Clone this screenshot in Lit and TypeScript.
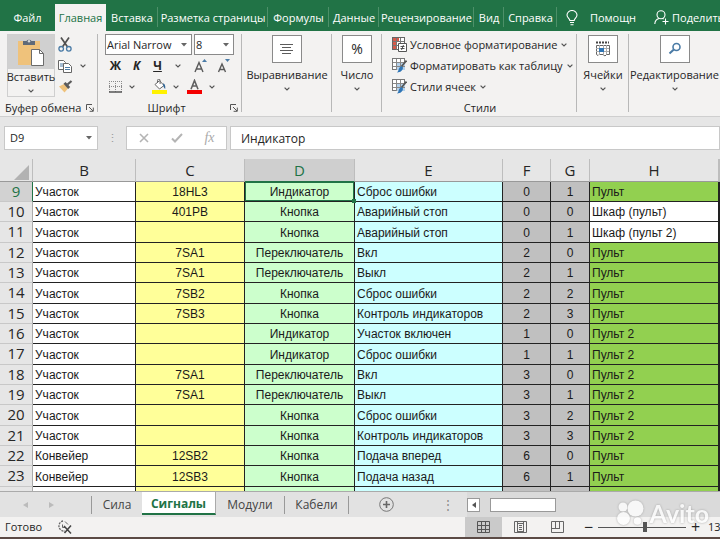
import { LitElement, html, css, svg, nothing } from "lit";
import { customElement, state } from "lit/decorators.js";
import { classMap } from "lit/directives/class-map.js";

type Row = [string, string, string, string, string, string, string];

const COLUMNS = ["B", "C", "D", "E", "F", "G", "H"];
const FIRST_ROW = 9;
const ROWS: Row[] = [
  ["Участок", "18HL3", "Индикатор", "Сброс ошибки", "0", "1", "Пульт"],
  ["Участок", "401PB", "Кнопка", "Аварийный стоп", "0", "0", "Шкаф (пульт)"],
  ["Участок", "", "Кнопка", "Аварийный стоп", "0", "1", "Шкаф (пульт 2)"],
  ["Участок", "7SA1", "Переключатель", "Вкл", "2", "0", "Пульт"],
  ["Участок", "7SA1", "Переключатель", "Выкл", "2", "1", "Пульт"],
  ["Участок", "7SB2", "Кнопка", "Сброс ошибки", "2", "2", "Пульт"],
  ["Участок", "7SB3", "Кнопка", "Контроль индикаторов", "2", "3", "Пульт"],
  ["Участок", "", "Индикатор", "Участок включен", "1", "0", "Пульт 2"],
  ["Участок", "", "Индикатор", "Сброс ошибки", "1", "1", "Пульт 2"],
  ["Участок", "7SA1", "Переключатель", "Вкл", "3", "0", "Пульт 2"],
  ["Участок", "7SA1", "Переключатель", "Выкл", "3", "1", "Пульт 2"],
  ["Участок", "", "Кнопка", "Сброс ошибки", "3", "2", "Пульт 2"],
  ["Участок", "", "Кнопка", "Контроль индикаторов", "3", "3", "Пульт 2"],
  ["Конвейер", "12SB2", "Кнопка", "Подача вперед", "6", "0", "Пульт"],
  ["Конвейер", "12SB3", "Кнопка", "Подача назад", "6", "1", "Пульт"],
  ["", "", "", "Сброс", "", "", "Пульт"],
];

const RIBBON_TABS = ["Файл", "Главная", "Вставка", "Разметка страницы", "Формулы", "Данные", "Рецензирование", "Вид", "Справка"];
const SHEETS = ["Сила", "Сигналы", "Модули", "Кабели"];

const chevron = html`<svg class="chev" width="6" height="4" viewBox="0 0 6 4"><path d="M.6 .6 3 3 5.4 .6" fill="none" stroke="#555" stroke-width="1.2"/></svg>`;
const triangle = html`<svg class="tri" width="6" height="4" viewBox="0 0 6 4"><path d="M0 0h6L3 3.6z" fill="#666"/></svg>`;
const launcher = html`<svg width="8" height="8" viewBox="0 0 8 8"><path d="M.5 6V.5H6M3 3l4 4M7.3 3.6v3.7H3.6" fill="none" stroke="#555"/></svg>`;

const pasteIcon = html`<svg width="28" height="28" viewBox="0 0 28 28">
  <rect x="1" y="3" width="22" height="24" fill="#efc27b"/>
  <path d="M6 3h3.500a3 2.600 0 0 1 5 0H18v4H6z" fill="#5f6a78"/><circle cx="12" cy="3.200" r="1.200" fill="#d9d9d9"/>
  <path d="M14.500 11.500h8l4 4v12h-12z" fill="#fff" stroke="#6b6b6b"/><path d="M22.500 11.500v4h4" fill="none" stroke="#6b6b6b"/></svg>`;
const cutIcon = html`<svg width="14" height="15" viewBox="0 0 14 15"><path d="M3 .5 9.600 10M11 .5 4.400 10" stroke="#505050" stroke-width="1.700" fill="none"/>
  <circle cx="3.200" cy="11.800" r="2.300" fill="none" stroke="#4a7ba6" stroke-width="1.300"/><circle cx="10.800" cy="11.800" r="2.300" fill="none" stroke="#4a7ba6" stroke-width="1.300"/></svg>`;
const copyIcon = html`<svg width="14" height="14" viewBox="0 0 14 14"><path d="M.5 1.500h5l2 2v7h-7z" fill="#fff" stroke="#666"/><path d="M2 5h4M2 7h4" stroke="#4a7ba6"/>
  <path d="M5.500 4.500h5l3 3v6h-8z" fill="#fff" stroke="#666"/><path d="M7 8.500h5M7 10.500h5" stroke="#4a7ba6"/></svg>`;
const brushIcon = html`<svg width="15" height="13" viewBox="0 0 15 13"><path d="M1 6.500 6 4l4 4.500L6.500 12.500z" fill="#efc27b"/><path d="M5.500 3.800 7.600 2l4.600 5-2 2z" fill="#5a5a5a"/><path d="m9.500 4.500 4-3.500" stroke="#5a5a5a" stroke-width="2.200"/></svg>`;
const borderIcon = html`<svg width="13" height="12" viewBox="0 0 13 12"><path d="M.5 0v11M12.500 0v11M6.500 0v11M0 .5h13M0 5.500h13" stroke="#8a8a8a" stroke-dasharray="1 1" fill="none"/><path d="M0 11h13" stroke="#555" stroke-width="1.500"/></svg>`;
const fillIcon = html`<svg width="16" height="15" viewBox="0 0 16 15"><path d="M0 11h15v4H0z" fill="#fff200"/><path d="m3 5.500 4.500-3.800L12 6.500 7.500 10z" fill="#fff" stroke="#666"/><path d="M5.500 4V1.500a1.300 1.300 0 0 1 2.600 0V5" fill="none" stroke="#666"/><path d="M11 4.500c2 0 2.500 2.500 2.200 5.500-1.500-1-2-3-2.200-5.500z" fill="#2f6597"/></svg>`;
const fontColorIcon = html`<svg width="15" height="15" viewBox="0 0 15 15"><path d="M0 11h15v4H0z" fill="#f40000"/><path d="M4 10.200 7.500 1.500 11 10.200M5.200 7h4.600" fill="none" stroke="#606060" stroke-width="1.600"/></svg>`;
const growIcon = (up: boolean) => html`<svg width="14" height="14" viewBox="0 0 14 14">${up
  ? svg`<path d="M1 13 5 3.500 9 13M2.400 10h5.200" fill="none" stroke="#5a5a5a" stroke-width="1.400"/><path d="m8 3 2.500-3L13 3z" fill="#4a7ba6"/>`
  : svg`<path d="M1.500 13 5 5l3.500 8M2.800 10.500h4.400" fill="none" stroke="#5a5a5a" stroke-width="1.400"/><path d="m8 0 2.500 3L13 0z" fill="#4a7ba6"/>`}</svg>`;
const alignIcon = html`<svg width="14" height="12" viewBox="0 0 14 12"><path d="M0 1.500h13M2 4.500h9M0 7.500h13M2 10.500h9" stroke="#5c5c5c"/></svg>`;
const cellsIcon = html`<svg width="16" height="16" viewBox="0 0 16 16"><path d="M1 1.500h13" stroke="#444" stroke-width="2" stroke-dasharray="2 1"/><path d="M1.500 4.500h13v9h-3l-1.500 1.500-2-1.500H4l-1 1-1.500-1z" fill="#fff" stroke="#666"/><path d="M1 7.500h13M1 10.500h13M4.500 4v10M8.500 4v10M11.500 4v9" stroke="#aaa"/><path d="M4 7h5v4H4z" fill="#2f75b5"/></svg>`;
const findIcon = html`<svg width="14" height="14" viewBox="0 0 14 14"><circle cx="8.500" cy="5" r="3.500" fill="none" stroke="#4a7ba6" stroke-width="1.600"/><path d="M5.800 7.500 1.500 11.500" stroke="#4a7ba6" stroke-width="2"/></svg>`;
const condIcon = html`<svg width="15" height="15" viewBox="0 0 15 15"><rect x=".5" y=".5" width="12" height="12" fill="#fff" stroke="#666"/><path d="M1 1h6v3H1zM1 5h3v3H1zM1 9h4v3H1z" fill="#d65a4a"/><path d="M4.500 1v12M8.500 1v12M1 4.500h11M1 8.500h11" stroke="#777"/><path d="M6.500 6.500h8v8h-8z" fill="#fff" stroke="#555"/><path d="M8.500 9.500h4M8.500 11.500h4M11.500 8l-2 5" stroke="#444" stroke-width=".9"/></svg>`;
const tableIcon = html`<svg width="15" height="15" viewBox="0 0 15 15"><rect x=".5" y=".5" width="12" height="11" fill="#fff" stroke="#777"/><path d="M4 4h9v8H4z" fill="#b5d1ea"/><path d="M4.500 1v11M8.500 1v11M1 4.500h12M1 8.500h12" stroke="#888"/><path d="m14.500 2.500-5 6" stroke="#555" stroke-width="1.800"/><path d="M9.500 8 11 9.600c0 3-2.500 4.900-6 4.900 2-1.500 1.500-5.500 4.500-6.500z" fill="#2f75b5"/></svg>`;
const bulbIcon = html`<svg width="12" height="16" viewBox="0 0 12 16"><path d="M3.800 10.500C3.800 8.800 1 7.800 1 5a5 4.500 0 0 1 10 0c0 2.800-2.800 3.800-2.800 5.500zM4 12.500h4M4.500 14.700h3" fill="none" stroke="#fff" stroke-width="1.100"/></svg>`;
const shareIcon = html`<svg width="15" height="15" viewBox="0 0 15 15"><circle cx="7" cy="4.700" r="4" fill="none" stroke="#fff" stroke-width="1.100"/><path d="M.8 14C1 10.500 3 9 5 8.500M8.500 8.500l1.200.6M8.500 11.500h6M11.500 8.500v6" fill="none" stroke="#fff" stroke-width="1.100"/></svg>`;
const cancelIcon = html`<svg width="10" height="10" viewBox="0 0 10 10"><path d="m1 1 8 8M9 1 1 9" stroke="#b4b4b4" stroke-width="1.600"/></svg>`;
const okIcon = html`<svg width="12" height="10" viewBox="0 0 12 10"><path d="m1 5.500 3 3L11 1" fill="none" stroke="#b4b4b4" stroke-width="2"/></svg>`;
const recordIcon = html`<svg width="16" height="15" viewBox="0 0 16 15"><path d="M6 1a5 5 0 1 0 2 10" fill="none" stroke="#666" stroke-width="1.300" stroke-dasharray="2 1"/><path d="M5.500 4.500v3h3M8 1.500l3 3" fill="none" stroke="#666"/><path d="m7 6 7 7.500M14 5.500 7.500 13" stroke="#444" stroke-width="1.500"/></svg>`;
const gridView = html`<svg width="13" height="12" viewBox="0 0 13 12"><path d="M.5.5h12v11H.5zM4.500 0v12M8.500 0v12M0 4.500h13M0 8.500h13" fill="none" stroke="#555"/></svg>`;
const pageView = html`<svg width="13" height="12" viewBox="0 0 13 12"><path d="M.5.5h12v11H.5zM3.500 1v10.500M9.500 1v10.500M3 2.500h7M5 4.500h3M5 6.500h3M5 8.500h3M3 10.500h7" fill="none" stroke="#666"/></svg>`;
const breakView = html`<svg width="13" height="12" viewBox="0 0 13 12"><path d="M.5.5h12v11H.5zM4.500 1v6M8.500 1v6M1 7.500h8" fill="none" stroke="#666"/></svg>`;

@customElement("app-root")
export class AppRoot extends LitElement {
  @state() private sheet = "Сигналы";
  @state() private tab = "Главная";

  static styles = css`
    :host { display: flex; flex-direction: column; height: 100vh; overflow: hidden; position: relative; background: #e6e6e6; color: #262626; font: 400 11px/16px "Open Sans", "Noto Sans", sans-serif; }
    * { box-sizing: border-box; }
    button, input, select { font: inherit; color: inherit; background: none; border: 0; padding: 0; margin: 0; border-radius: 0; white-space: nowrap; }
    svg { display: block; flex: none; }

    .tabs { flex: none; display: grid; grid-template-columns: 55px 51px 52px 110px 61px 50px 95px 30px 53px 88px 1fr; height: 31px; padding-top: 4px; background: #217346; color: #fff; overflow: hidden; }
    .tabs button { display: flex; align-items: center; justify-content: center; position: relative; }
    .tabs .on { background: #f3f2f1; color: #217346; }
    .tabs .div::after { content: ""; position: absolute; right: 0; top: 3px; bottom: 4px; width: 1px; background: #4d9069; }
    .tabs .tell { gap: 12px; }
    .tabs .share { gap: 3px; justify-content: flex-start; padding-left: 9px; }

    .ribbon { flex: none; display: grid; grid-template-columns: 98px 144px 90px 50px 195px 52px 1fr; height: 86px; padding-top: 3px; background: #f3f2f1; border-bottom: 1px solid #cfcfcf; overflow: hidden; }
    .group { display: flex; flex-direction: column; min-width: 0; background: linear-gradient(#b8b8b8, #b8b8b8) right top / 1px 78px no-repeat; }
    .group:last-child { background: none; }
    .body { flex: 1; display: flex; min-height: 0; }
    .foot { display: flex; align-items: center; height: 16px; padding: 0 4px 0 5px; }
    .foot span { flex: 1; text-align: center; white-space: nowrap; }
    .foot .start { text-align: left; }
    .paste { width: 48px; height: 63px; margin-left: 7px; display: flex; flex-direction: column; align-items: center; border: 1px solid #cfcfcf; }
    .paste .pic { width: 100%; height: 34px; display: flex; align-items: center; justify-content: center; background: #d0d0d0; }
    .paste .chev { margin-top: 4px; }
    .clip { display: grid; grid-auto-rows: 21px; margin-left: 3px; }
    .clip button { display: flex; align-items: center; gap: 8px; }
    .font { flex-direction: column; padding: 0 3px 0 7px; }
    .line { display: flex; align-items: center; height: 21px; }
    .combo { display: flex; align-items: center; height: 21px; border: 1px solid #8a8a8a; background: #fff; position: relative; }
    .combo select { appearance: none; width: 100%; height: 100%; padding-left: 1px; }
    .combo .tri { position: absolute; right: 4px; pointer-events: none; }
    .combo.name { width: 87px; margin-right: 2px; }
    .combo.size { width: 40px; }
    .cells { display: grid; grid-template-columns: 21px 21px 21px 20px 26px 20px; }
    .cells button, .fills button { display: flex; align-items: center; justify-content: center; height: 21px; }
    .cells b { font-size: 12px; }
    .fills { display: grid; grid-template-columns: 21px 12px 11px 21px 12px 24px 12px; }
    .big { display: flex; flex-direction: column; align-items: center; padding-top: 1px; min-width: 0; }
    .big .frame { width: 30px; height: 28px; display: flex; align-items: center; justify-content: center; background: #fff; border: 1px solid #8a8a8a; font-size: 14px; }
    .big .lbl { margin: 4px 0; }
    .styles { flex-direction: column; padding-left: 10px; }
    .styles button { height: 21px; display: flex; align-items: center; gap: 3px; }
    .styles .chev { margin-left: 1px; }

    .formula { flex: none; display: flex; height: 42px; padding: 9px 0; }
    .formula > * { background: #fff; border: 1px solid #c8c8c8; }
    .where { width: 94px; margin-left: 4px; display: flex; align-items: center; padding: 0 5px; }
    .where input { width: 100%; min-width: 0; }
    .formula .grip { width: 28px; display: flex; align-items: center; justify-content: center; background: none; border: 0; color: #999; }
    .fx { width: 101px; display: grid; grid-template-columns: 1fr 1fr 1fr; margin-right: 3px; }
    .fx button { display: flex; align-items: center; justify-content: center; color: #aaa; font: italic 14px "Liberation Serif", serif; }
    .value { flex: 1; min-width: 0; }
    .value input { width: 100%; height: 100%; padding-left: 10px; font-size: 12px; }

    .sheet { flex: 1; min-height: 0; overflow: hidden; }
    table { width: 100%; table-layout: fixed; border-collapse: separate; border-spacing: 0; }
    th { padding: 0; font-weight: 400; color: #262626; }
    .w-n { width: 33px; } .w-b { width: 103px; } .w-c { width: 109px; } .w-d { width: 110px; } .w-e { width: 148px; } .w-f { width: 48px; } .w-g { width: 39px; } .w-h { width: 129px; }
    thead th { height: 23px; font-size: 15px; line-height: 22px; border-right: 1px solid #bdbdbd; border-bottom: 1px solid #999; }
    thead .sel { background: #cfcfcf; color: #217346; border-bottom-color: #217346; }
    .corner svg { margin: 5px 3px 0 auto; }
    tbody tr { height: 20px; }
    tbody tr:nth-child(3n) { height: 21px; }
    tbody th { font-size: 15px; line-height: 18px; vertical-align: top; border-right: 1px solid #aaa; border-bottom: 1px solid #c8c8c8; }
    tbody .sel { background: #d2d2d2; color: #217346; border-right-color: #217346; }
    td { padding: 0 2px; font: 12px/18px "Liberation Sans Narrow", "Liberation Sans", sans-serif; color: #1a1a1a; vertical-align: bottom; border-right: 1px solid #222; border-bottom: 1px solid #222; white-space: nowrap; overflow: hidden; background: #fff; }
    .c-c, .c-d, .c-f, .c-g { text-align: center; }
    .c-c { background: #ffff99; }
    .c-d { background: #ccffcc; }
    .c-e { background: #ccffff; }
    .c-f, .c-g { background: #c0c0c0; }
    .c-h.green { background: #92d050; }
    .c-i { padding: 0; }
    .active { position: relative; overflow: visible; box-shadow: inset 0 0 0 1px #217346; }
    .active::after { content: ""; position: absolute; right: -2px; bottom: -2px; width: 4px; height: 4px; background: #217346; }

    .sheets { flex: none; display: flex; align-items: center; height: 26px; font-size: 12px; border-top: 1px solid #aaa; background: #e2e2e2; color: #444; }
    .arrows { width: 92px; height: 18px; display: flex; align-items: center; justify-content: center; gap: 21px; padding-right: 14px; border-right: 1px solid #999; }
    .sheets .tab { height: 18px; border-right: 1px solid #999; width: 64px; }
    .sheets .tab:nth-of-type(1) { width: 50px; border-right: 0; }
    .sheets .tab.on { align-self: flex-start; width: 74px; height: 23px; padding-top: 2px; background: #fff; color: #217346; font-weight: 700; border-right: 1px solid #aaa; border-bottom: 2px solid #217346; }
    .sheets .tab.m { width: 69px; }
    .plus { margin-left: 30px; }
    .dots { margin-left: auto; color: #888; }
    .hscroll { width: 253px; height: 100%; margin-left: 13px; display: flex; align-items: center; background: #dadada; }
    .hscroll button { width: 13px; height: 14px; display: flex; align-items: center; justify-content: center; background: #fff; border: 1px solid #999; }
    .thumb { width: 66px; height: 14px; margin-left: 10px; background: #fff; border: 1px solid #999; }

    .status { flex: none; display: flex; align-items: center; height: 22px; background: #f3f2f1; border-bottom: 2px solid #5b4a45; overflow: hidden; }
    .status .ready { width: 57px; padding-left: 5px; }
    .views { margin-left: auto; display: flex; height: 100%; }
    .views button { width: 37px; display: flex; align-items: center; justify-content: center; }
    .views .on { background: #cacaca; }
    .zoom { width: 144px; display: flex; align-items: center; gap: 5px; padding-left: 8px; }
    .zoom button { width: 9px; font-size: 16px; }
    .zoom input { appearance: none; flex: 1; min-width: 0; height: 12px; background: linear-gradient(#555, #555) center / 100% 1px no-repeat; }
    .zoom input::-webkit-slider-thumb { appearance: none; width: 4px; height: 10px; background: #555; }
    .zoom span { width: 12px; overflow: hidden; margin-left: 3px; }

    .mark { position: absolute; right: 11px; bottom: 10px; display: flex; align-items: center; gap: 4px; color: #fff; opacity: 0.8; font: 700 25px/32px Lato, "Open Sans", sans-serif; pointer-events: none; filter: drop-shadow(0 0 1px #999); }
  `;

  private big(icon: unknown, label: string) {
    return html`<div class="group"><button class="big"><span class="frame">${icon}</span><span class="lbl">${label}</span>${chevron}</button></div>`;
  }

  private cell(row: Row, r: number, c: number) {
    const key = COLUMNS[c].toLowerCase();
    const cls = { [`c-${key}`]: true, green: c === 6 && row[6].startsWith("Пульт"), active: r === 0 && c === 2 };
    return html`<td class=${classMap(cls)}>${row[c]}</td>`;
  }

  render() {
    return html`
      <nav class="tabs">
        ${RIBBON_TABS.map((t, i) => html`<button class=${classMap({ on: t === this.tab, div: i > 1 })} @click=${() => (this.tab = t)}>${t}</button>`)}
        <button class="tell">${bulbIcon}Помощн</button>
        <button class="share">${shareIcon}Поделиться</button>
      </nav>

      <section class="ribbon">
        <div class="group">
          <div class="body">
            <button class="paste"><span class="pic">${pasteIcon}</span><span>Вставить</span>${chevron}</button>
            <div class="clip">
              <button aria-label="Вырезать">${cutIcon}</button>
              <button aria-label="Копировать">${copyIcon}${chevron}</button>
              <button aria-label="Формат по образцу">${brushIcon}</button>
            </div>
          </div>
          <div class="foot"><span class="start">Буфер обмена</span>${launcher}</div>
        </div>
        <div class="group">
          <div class="body font">
            <div class="line">
              <label class="combo name"><select aria-label="Шрифт"><option>Arial Narrow</option></select>${triangle}</label>
              <label class="combo size"><select aria-label="Размер"><option>8</option></select>${triangle}</label>
            </div>
            <div class="cells">
              <button><b>Ж</b></button><button><b><i>К</i></b></button><button><b><u>Ч</u></b></button>
              <button aria-label="Подчёркивание">${chevron}</button>
              <button aria-label="Увеличить">${growIcon(true)}</button><button aria-label="Уменьшить">${growIcon(false)}</button>
            </div>
            <div class="fills">
              <button aria-label="Границы">${borderIcon}</button><button aria-label="Виды границ">${chevron}</button><span></span>
              <button aria-label="Заливка">${fillIcon}</button><button aria-label="Цвета заливки">${chevron}</button>
              <button aria-label="Цвет текста">${fontColorIcon}</button><button aria-label="Цвета текста">${chevron}</button>
            </div>
          </div>
          <div class="foot"><span>Шрифт</span>${launcher}</div>
        </div>
        ${this.big(alignIcon, "Выравнивание")}
        ${this.big("%", "Число")}
        <div class="group">
          <div class="body styles">
            <button>${condIcon}Условное форматирование${chevron}</button>
            <button>${tableIcon}Форматировать как таблицу${chevron}</button>
            <button>${tableIcon}Стили ячеек${chevron}</button>
          </div>
          <div class="foot"><span>Стили</span></div>
        </div>
        ${this.big(cellsIcon, "Ячейки")}
        ${this.big(findIcon, "Редактирование")}
      </section>

      <section class="formula">
        <label class="where"><input aria-label="Имя ячейки" value="D9" />${triangle}</label>
        <span class="grip">⋮</span>
        <div class="fx"><button aria-label="Отмена">${cancelIcon}</button><button aria-label="Ввод">${okIcon}</button><button>fx</button></div>
        <label class="value"><input aria-label="Строка формул" value="Индикатор" /></label>
      </section>

      <main class="sheet">
        <table>
          <colgroup><col class="w-n" />${COLUMNS.map((c) => html`<col class="w-${c.toLowerCase()}" />`)}<col /></colgroup>
          <thead><tr>
            <th class="corner"><svg width="15" height="15" viewBox="0 0 15 15"><path d="M15 0v15H0z" fill="#b2b2b2"/></svg></th>
            ${COLUMNS.map((c) => html`<th class=${c === "D" ? "sel" : nothing}>${c}</th>`)}<th></th>
          </tr></thead>
          <tbody>
            ${ROWS.map((row, r) => html`<tr><th class=${r === 0 ? "sel" : nothing}>${FIRST_ROW + r}</th>${COLUMNS.map((_, c) => this.cell(row, r, c))}<td class="c-i"></td></tr>`)}
          </tbody>
        </table>
      </main>

      <nav class="sheets">
        <div class="arrows">
          <svg width="5" height="6" viewBox="0 0 5 6"><path d="M5 0v6L0 3z" fill="#bbb"/></svg>
          <svg width="5" height="6" viewBox="0 0 5 6"><path d="M0 0v6l5-3z" fill="#bbb"/></svg>
        </div>
        ${SHEETS.map((s) => html`<button class=${classMap({ tab: true, on: s === this.sheet, m: s === "Модули" })} @click=${() => (this.sheet = s)}>${s}</button>`)}
        <button class="plus" aria-label="Новый лист"><svg width="15" height="15" viewBox="0 0 15 15"><circle cx="7.500" cy="7.500" r="6.800" fill="none" stroke="#777"/><path d="M7.500 4v7M4 7.500h7" stroke="#666" stroke-width="1.600"/></svg></button>
        <span class="dots">⋮</span>
        <div class="hscroll"><button aria-label="Прокрутить влево"><svg width="4" height="6" viewBox="0 0 4 6"><path d="M4 0v6L0 3z" fill="#555"/></svg></button><div class="thumb"></div></div>
      </nav>

      <footer class="status">
        <span class="ready">Готово</span>${recordIcon}
        <div class="views">
          <button class="on" aria-label="Обычный">${gridView}</button><button aria-label="Разметка">${pageView}</button><button aria-label="Страничный">${breakView}</button>
        </div>
        <div class="zoom"><button>−</button><input type="range" aria-label="Масштаб" min="0" max="100" value="54" /><button>+</button><span>130%</span></div>
      </footer>

      <div class="mark">
        <svg width="29" height="26" viewBox="0 0 29 26" fill="#fff"><circle cx="18.500" cy="8.500" r="8"/><circle cx="6" cy="7" r="4.500"/><circle cx="6.500" cy="18.500" r="6.500"/><circle cx="20.500" cy="21" r="3.800"/></svg>
        <span>Avito</span>
      </div>
    `;
  }
}
